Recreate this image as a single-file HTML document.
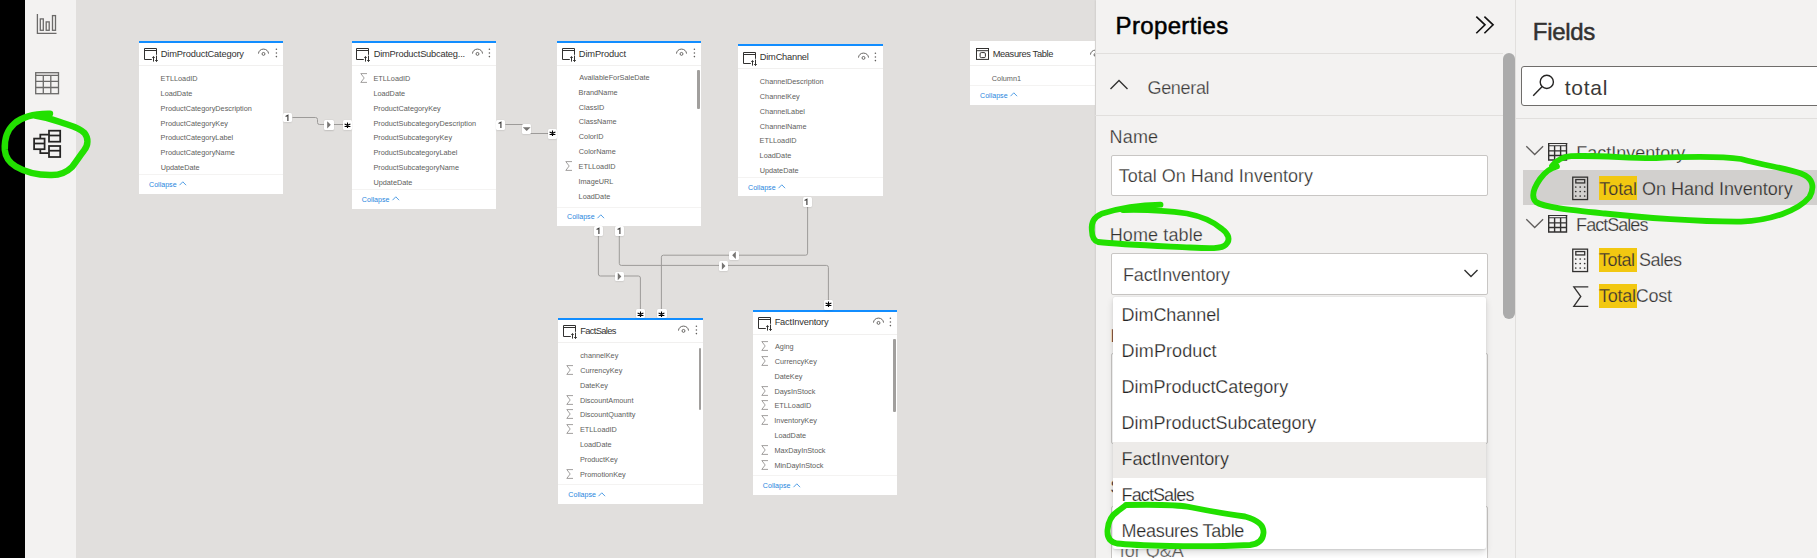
<!DOCTYPE html><html><head><meta charset="utf-8"><style>
*{margin:0;padding:0;box-sizing:border-box}
html,body{width:1817px;height:558px;overflow:hidden;background:#e1dfdd;font-family:"Liberation Sans", sans-serif}
.a{position:absolute}
.t{position:absolute;white-space:nowrap}
svg{position:absolute;overflow:visible}
</style></head><body>

<div class="a" style="left:0;top:0;width:25px;height:558px;background:#000"></div>
<div class="a" style="left:25px;top:0;width:51px;height:558px;background:#f3f2f1"></div>
<svg class="a" style="left:0;top:0" width="80" height="200" viewBox="0 0 80 200">
<g fill="none" stroke="#6b6a69" stroke-width="1.3">
<path d="M37.4 14 V33.3 H56.5"/>
<rect x="40.3" y="18.9" width="3" height="11.4"/>
<rect x="46.2" y="21.9" width="3" height="8.4"/>
<rect x="52.5" y="15.6" width="3" height="14.7"/>
</g>
<g fill="none" stroke="#6b6a69" stroke-width="1.3">
<rect x="35.7" y="72.7" width="22.8" height="21"/>
<path d="M35.7 75.4 H58.5 M35.7 81.3 H58.5 M35.7 87.5 H58.5 M43.3 75.4 V93.7 M50.8 75.4 V93.7"/>
</g>
<g fill="none" stroke="#252423" stroke-width="1.75">
<path d="M40.3 138.4 V134.5 H48.6 M40.3 149.4 V153 H48.6"/>
<rect x="34.1" y="138.6" width="10.5" height="10.6"/>
<path d="M34.1 143.5 H44.6"/>
<rect x="49" y="130.7" width="11.2" height="11"/>
<path d="M49 135.5 H60.2"/>
<rect x="49" y="146" width="11.2" height="11"/>
<path d="M49 150.7 H60.2"/>
</g>
</svg>
<div class="a" style="left:139px;top:40.8px;width:144.1px;height:152.89999999999998px;background:#fff;overflow:hidden">
<div class="a" style="left:0;top:0;width:144.1px;height:2px;background:#118dff"></div>
<svg style="left:5px;top:7.200000000000003px" width="16" height="16" viewBox="0 0 16 16"><g fill="none" stroke="#323130" stroke-width="1"><path d="M7.8 11.5 H0.5 V0.5 H12.5 V6.8"/><path d="M0.5 2.5 H12.5"/></g><g fill="none" stroke="#323130" stroke-width="1"><path d="M9.5 13.6 V8.6 M8.3 9.8 L9.5 8.6 L10.7 9.8 M12.5 7.6 V13.5 M11.2 12.2 L12.5 13.5 L13.8 12.2"/></g></svg>
<div class="t" style="left:21.83px;top:7.08px;line-height:13px;font-size:9.3px;color:#323130;letter-spacing:-0.185px;">DimProductCategory</div>
<svg style="left:118.3px;top:7.6px" width="14" height="9" viewBox="0 0 14 9"><g fill="none" stroke="#605e5c" stroke-width="0.95"><path d="M1.5 5.6 A5 4.5 0 0 1 11.5 5.6"/><circle cx="6.5" cy="5.9" r="1.45"/></g></svg>
<svg style="left:134.5px;top:7.5px" width="5" height="10" viewBox="0 0 5 10"><g fill="#605e5c"><circle cx="2.4" cy="1.3" r="0.8"/><circle cx="2.4" cy="5" r="0.8"/><circle cx="2.4" cy="8.6" r="0.8"/></g></svg>
<div class="a" style="left:0;top:24.3px;width:144.1px;height:1px;background:#f1f0ef"></div>
<div class="t" style="left:21.60px;top:33.37px;line-height:10px;font-size:7.3px;color:#605e5c;">ETLLoadID</div>
<div class="t" style="left:21.60px;top:48.19px;line-height:10px;font-size:7.3px;color:#605e5c;">LoadDate</div>
<div class="t" style="left:21.60px;top:63.01px;line-height:10px;font-size:7.3px;color:#605e5c;">ProductCategoryDescription</div>
<div class="t" style="left:21.60px;top:77.83px;line-height:10px;font-size:7.3px;color:#605e5c;">ProductCategoryKey</div>
<div class="t" style="left:21.60px;top:92.65px;line-height:10px;font-size:7.3px;color:#605e5c;">ProductCategoryLabel</div>
<div class="t" style="left:21.60px;top:107.47px;line-height:10px;font-size:7.3px;color:#605e5c;">ProductCategoryName</div>
<div class="t" style="left:21.63px;top:122.29px;line-height:10px;font-size:7.3px;color:#605e5c;">UpdateDate</div>
<div class="a" style="left:0;top:133.5px;width:144.1px;height:1px;background:#f4f3f2"></div>
<div class="t" style="left:10.05px;top:139.14px;line-height:10px;font-size:7.1px;color:#2886de;letter-spacing:-0.009px;">Collapse</div>
<svg style="left:40px;top:140.70px" width="8" height="5" viewBox="0 0 8 5"><path d="M0.5 4.2 L3.8 0.8 L7.1 4.2" fill="none" stroke="#2886de" stroke-width="0.8"/></svg>
</div>
<div class="a" style="left:351.8px;top:40.8px;width:144.7px;height:167.8px;background:#fff;overflow:hidden">
<div class="a" style="left:0;top:0;width:144.7px;height:2px;background:#118dff"></div>
<svg style="left:4.199999999999989px;top:7.200000000000003px" width="16" height="16" viewBox="0 0 16 16"><g fill="none" stroke="#323130" stroke-width="1"><path d="M7.8 11.5 H0.5 V0.5 H12.5 V6.8"/><path d="M0.5 2.5 H12.5"/></g><g fill="none" stroke="#323130" stroke-width="1"><path d="M9.5 13.6 V8.6 M8.3 9.8 L9.5 8.6 L10.7 9.8 M12.5 7.6 V13.5 M11.2 12.2 L12.5 13.5 L13.8 12.2"/></g></svg>
<div class="t" style="left:21.83px;top:7.08px;line-height:13px;font-size:9.3px;color:#323130;letter-spacing:-0.206px;">DimProductSubcateg...</div>
<svg style="left:118.89999999999999px;top:7.6px" width="14" height="9" viewBox="0 0 14 9"><g fill="none" stroke="#605e5c" stroke-width="0.95"><path d="M1.5 5.6 A5 4.5 0 0 1 11.5 5.6"/><circle cx="6.5" cy="5.9" r="1.45"/></g></svg>
<svg style="left:135.1px;top:7.5px" width="5" height="10" viewBox="0 0 5 10"><g fill="#605e5c"><circle cx="2.4" cy="1.3" r="0.8"/><circle cx="2.4" cy="5" r="0.8"/><circle cx="2.4" cy="8.6" r="0.8"/></g></svg>
<div class="a" style="left:0;top:24.3px;width:144.7px;height:1px;background:#f1f0ef"></div>
<svg style="left:8px;top:32.400000000000006px" width="8" height="10" viewBox="0 0 8 10"><path d="M7 0.6 H0.8 L4.2 5 L0.8 9.4 H7" fill="none" stroke="#8a8886" stroke-width="0.8"/></svg>
<div class="t" style="left:21.60px;top:33.37px;line-height:10px;font-size:7.3px;color:#605e5c;">ETLLoadID</div>
<div class="t" style="left:21.60px;top:48.19px;line-height:10px;font-size:7.3px;color:#605e5c;">LoadDate</div>
<div class="t" style="left:21.60px;top:63.01px;line-height:10px;font-size:7.3px;color:#605e5c;">ProductCategoryKey</div>
<div class="t" style="left:21.60px;top:77.83px;line-height:10px;font-size:7.3px;color:#605e5c;">ProductSubcategoryDescription</div>
<div class="t" style="left:21.60px;top:92.65px;line-height:10px;font-size:7.3px;color:#605e5c;">ProductSubcategoryKey</div>
<div class="t" style="left:21.60px;top:107.47px;line-height:10px;font-size:7.3px;color:#605e5c;">ProductSubcategoryLabel</div>
<div class="t" style="left:21.60px;top:122.29px;line-height:10px;font-size:7.3px;color:#605e5c;">ProductSubcategoryName</div>
<div class="t" style="left:21.63px;top:137.11px;line-height:10px;font-size:7.3px;color:#605e5c;">UpdateDate</div>
<div class="a" style="left:0;top:148.4px;width:144.7px;height:1px;background:#f4f3f2"></div>
<div class="t" style="left:10.04px;top:154.04px;line-height:10px;font-size:7.1px;color:#2886de;letter-spacing:-0.009px;">Collapse</div>
<svg style="left:40px;top:155.60px" width="8" height="5" viewBox="0 0 8 5"><path d="M0.5 4.2 L3.8 0.8 L7.1 4.2" fill="none" stroke="#2886de" stroke-width="0.8"/></svg>
</div>
<div class="a" style="left:557px;top:40.5px;width:144.2px;height:185.4px;background:#fff;overflow:hidden">
<div class="a" style="left:0;top:0;width:144.2px;height:2px;background:#118dff"></div>
<svg style="left:5px;top:7.5px" width="16" height="16" viewBox="0 0 16 16"><g fill="none" stroke="#323130" stroke-width="1"><path d="M7.8 11.5 H0.5 V0.5 H12.5 V6.8"/><path d="M0.5 2.5 H12.5"/></g><g fill="none" stroke="#323130" stroke-width="1"><path d="M9.5 13.6 V8.6 M8.3 9.8 L9.5 8.6 L10.7 9.8 M12.5 7.6 V13.5 M11.2 12.2 L12.5 13.5 L13.8 12.2"/></g></svg>
<div class="t" style="left:21.83px;top:7.08px;line-height:13px;font-size:9.3px;color:#323130;letter-spacing:-0.148px;">DimProduct</div>
<svg style="left:118.39999999999999px;top:7.6px" width="14" height="9" viewBox="0 0 14 9"><g fill="none" stroke="#605e5c" stroke-width="0.95"><path d="M1.5 5.6 A5 4.5 0 0 1 11.5 5.6"/><circle cx="6.5" cy="5.9" r="1.45"/></g></svg>
<svg style="left:134.6px;top:7.5px" width="5" height="10" viewBox="0 0 5 10"><g fill="#605e5c"><circle cx="2.4" cy="1.3" r="0.8"/><circle cx="2.4" cy="5" r="0.8"/><circle cx="2.4" cy="8.6" r="0.8"/></g></svg>
<div class="a" style="left:0;top:24.3px;width:144.2px;height:1px;background:#f1f0ef"></div>
<div class="t" style="left:22.18px;top:32.47px;line-height:10px;font-size:7.3px;color:#605e5c;">AvailableForSaleDate</div>
<div class="t" style="left:21.60px;top:47.29px;line-height:10px;font-size:7.3px;color:#605e5c;">BrandName</div>
<div class="t" style="left:21.84px;top:62.11px;line-height:10px;font-size:7.3px;color:#605e5c;">ClassID</div>
<div class="t" style="left:21.84px;top:76.93px;line-height:10px;font-size:7.3px;color:#605e5c;">ClassName</div>
<div class="t" style="left:21.84px;top:91.75px;line-height:10px;font-size:7.3px;color:#605e5c;">ColorID</div>
<div class="t" style="left:21.84px;top:106.57px;line-height:10px;font-size:7.3px;color:#605e5c;">ColorName</div>
<svg style="left:8px;top:120.42px" width="8" height="10" viewBox="0 0 8 10"><path d="M7 0.6 H0.8 L4.2 5 L0.8 9.4 H7" fill="none" stroke="#8a8886" stroke-width="0.8"/></svg>
<div class="t" style="left:21.60px;top:121.39px;line-height:10px;font-size:7.3px;color:#605e5c;">ETLLoadID</div>
<div class="t" style="left:21.52px;top:136.21px;line-height:10px;font-size:7.3px;color:#605e5c;">ImageURL</div>
<div class="t" style="left:21.60px;top:151.03px;line-height:10px;font-size:7.3px;color:#605e5c;">LoadDate</div>
<div class="a" style="left:0;top:166.0px;width:144.2px;height:1px;background:#f4f3f2"></div>
<div class="t" style="left:10.04px;top:171.64px;line-height:10px;font-size:7.1px;color:#2886de;letter-spacing:-0.009px;">Collapse</div>
<svg style="left:40px;top:173.20px" width="8" height="5" viewBox="0 0 8 5"><path d="M0.5 4.2 L3.8 0.8 L7.1 4.2" fill="none" stroke="#2886de" stroke-width="0.8"/></svg>
<div class="a" style="left:140.29999999999995px;top:29.299999999999997px;width:2.5px;height:39.7px;background:#a19f9d;border-radius:1px"></div>
</div>
<div class="a" style="left:738px;top:44.2px;width:144.8px;height:152.3px;background:#fff;overflow:hidden">
<div class="a" style="left:0;top:0;width:144.8px;height:2px;background:#118dff"></div>
<svg style="left:5px;top:7.799999999999997px" width="16" height="16" viewBox="0 0 16 16"><g fill="none" stroke="#323130" stroke-width="1"><path d="M7.8 11.5 H0.5 V0.5 H12.5 V6.8"/><path d="M0.5 2.5 H12.5"/></g><g fill="none" stroke="#323130" stroke-width="1"><path d="M9.5 13.6 V8.6 M8.3 9.8 L9.5 8.6 L10.7 9.8 M12.5 7.6 V13.5 M11.2 12.2 L12.5 13.5 L13.8 12.2"/></g></svg>
<div class="t" style="left:21.83px;top:7.08px;line-height:13px;font-size:9.3px;color:#323130;letter-spacing:-0.242px;">DimChannel</div>
<svg style="left:119.00000000000001px;top:7.6px" width="14" height="9" viewBox="0 0 14 9"><g fill="none" stroke="#605e5c" stroke-width="0.95"><path d="M1.5 5.6 A5 4.5 0 0 1 11.5 5.6"/><circle cx="6.5" cy="5.9" r="1.45"/></g></svg>
<svg style="left:135.20000000000002px;top:7.5px" width="5" height="10" viewBox="0 0 5 10"><g fill="#605e5c"><circle cx="2.4" cy="1.3" r="0.8"/><circle cx="2.4" cy="5" r="0.8"/><circle cx="2.4" cy="8.6" r="0.8"/></g></svg>
<div class="a" style="left:0;top:24.3px;width:144.8px;height:1px;background:#f1f0ef"></div>
<div class="t" style="left:21.84px;top:32.87px;line-height:10px;font-size:7.3px;color:#605e5c;">ChannelDescription</div>
<div class="t" style="left:21.84px;top:47.69px;line-height:10px;font-size:7.3px;color:#605e5c;">ChannelKey</div>
<div class="t" style="left:21.84px;top:62.51px;line-height:10px;font-size:7.3px;color:#605e5c;">ChannelLabel</div>
<div class="t" style="left:21.84px;top:77.33px;line-height:10px;font-size:7.3px;color:#605e5c;">ChannelName</div>
<div class="t" style="left:21.60px;top:92.15px;line-height:10px;font-size:7.3px;color:#605e5c;">ETLLoadID</div>
<div class="t" style="left:21.60px;top:106.97px;line-height:10px;font-size:7.3px;color:#605e5c;">LoadDate</div>
<div class="t" style="left:21.63px;top:121.79px;line-height:10px;font-size:7.3px;color:#605e5c;">UpdateDate</div>
<div class="a" style="left:0;top:132.9px;width:144.8px;height:1px;background:#f4f3f2"></div>
<div class="t" style="left:10.04px;top:138.54px;line-height:10px;font-size:7.1px;color:#2886de;letter-spacing:-0.009px;">Collapse</div>
<svg style="left:40px;top:140.10px" width="8" height="5" viewBox="0 0 8 5"><path d="M0.5 4.2 L3.8 0.8 L7.1 4.2" fill="none" stroke="#2886de" stroke-width="0.8"/></svg>
</div>
<div class="a" style="left:970px;top:41px;width:125px;height:63.599999999999994px;background:#fff;overflow:hidden">
<svg style="left:5.6px;top:6.6px" width="16" height="16" viewBox="0 0 16 16"><g fill="none" stroke="#323130" stroke-width="1"><rect x="0.5" y="0.5" width="12" height="10.9"/><path d="M0.5 2.7 H12.5"/><rect x="4.1" y="4.6" width="5.3" height="5" rx="1.2"/></g></svg>
<div class="t" style="left:22.63px;top:7.08px;line-height:13px;font-size:9.3px;color:#323130;letter-spacing:-0.362px;">Measures Table</div>
<svg style="left:119.2px;top:7.6px" width="14" height="9" viewBox="0 0 14 9"><g fill="none" stroke="#605e5c" stroke-width="0.95"><path d="M1.5 5.6 A5 4.5 0 0 1 11.5 5.6"/><circle cx="6.5" cy="5.9" r="1.45"/></g></svg>
<svg style="left:135.4px;top:7.5px" width="5" height="10" viewBox="0 0 5 10"><g fill="#605e5c"><circle cx="2.4" cy="1.3" r="0.8"/><circle cx="2.4" cy="5" r="0.8"/><circle cx="2.4" cy="8.6" r="0.8"/></g></svg>
<div class="a" style="left:0;top:24.3px;width:145px;height:1px;background:#f1f0ef"></div>
<div class="t" style="left:21.84px;top:33.37px;line-height:10px;font-size:7.3px;color:#605e5c;">Column1</div>
<div class="a" style="left:0;top:44.2px;width:145px;height:1px;background:#f4f3f2"></div>
<div class="t" style="left:10.04px;top:49.84px;line-height:10px;font-size:7.1px;color:#2886de;letter-spacing:-0.009px;">Collapse</div>
<svg style="left:40px;top:51.40px" width="8" height="5" viewBox="0 0 8 5"><path d="M0.5 4.2 L3.8 0.8 L7.1 4.2" fill="none" stroke="#2886de" stroke-width="0.8"/></svg>
</div>
<div class="a" style="left:558.3px;top:317.8px;width:144.9px;height:186.0px;background:#fff;overflow:hidden">
<div class="a" style="left:0;top:0;width:144.9px;height:2px;background:#118dff"></div>
<svg style="left:4.7000000000000455px;top:7.199999999999989px" width="16" height="16" viewBox="0 0 16 16"><g fill="none" stroke="#323130" stroke-width="1"><path d="M7.8 11.5 H0.5 V0.5 H12.5 V6.8"/><path d="M0.5 2.5 H12.5"/></g><g fill="none" stroke="#323130" stroke-width="1"><path d="M9.5 13.6 V8.6 M8.3 9.8 L9.5 8.6 L10.7 9.8 M12.5 7.6 V13.5 M11.2 12.2 L12.5 13.5 L13.8 12.2"/></g></svg>
<div class="t" style="left:21.83px;top:7.08px;line-height:13px;font-size:9.3px;color:#323130;letter-spacing:-0.621px;">FactSales</div>
<svg style="left:119.10000000000001px;top:7.6px" width="14" height="9" viewBox="0 0 14 9"><g fill="none" stroke="#605e5c" stroke-width="0.95"><path d="M1.5 5.6 A5 4.5 0 0 1 11.5 5.6"/><circle cx="6.5" cy="5.9" r="1.45"/></g></svg>
<svg style="left:135.3px;top:7.5px" width="5" height="10" viewBox="0 0 5 10"><g fill="#605e5c"><circle cx="2.4" cy="1.3" r="0.8"/><circle cx="2.4" cy="5" r="0.8"/><circle cx="2.4" cy="8.6" r="0.8"/></g></svg>
<div class="a" style="left:0;top:24.3px;width:144.9px;height:1px;background:#f1f0ef"></div>
<div class="t" style="left:21.89px;top:33.37px;line-height:10px;font-size:7.3px;color:#605e5c;">channelKey</div>
<svg style="left:8px;top:47.219999999999985px" width="8" height="10" viewBox="0 0 8 10"><path d="M7 0.6 H0.8 L4.2 5 L0.8 9.4 H7" fill="none" stroke="#8a8886" stroke-width="0.8"/></svg>
<div class="t" style="left:21.84px;top:48.19px;line-height:10px;font-size:7.3px;color:#605e5c;">CurrencyKey</div>
<div class="t" style="left:21.60px;top:63.01px;line-height:10px;font-size:7.3px;color:#605e5c;">DateKey</div>
<svg style="left:8px;top:76.85999999999997px" width="8" height="10" viewBox="0 0 8 10"><path d="M7 0.6 H0.8 L4.2 5 L0.8 9.4 H7" fill="none" stroke="#8a8886" stroke-width="0.8"/></svg>
<div class="t" style="left:21.60px;top:77.83px;line-height:10px;font-size:7.3px;color:#605e5c;">DiscountAmount</div>
<svg style="left:8px;top:91.67999999999996px" width="8" height="10" viewBox="0 0 8 10"><path d="M7 0.6 H0.8 L4.2 5 L0.8 9.4 H7" fill="none" stroke="#8a8886" stroke-width="0.8"/></svg>
<div class="t" style="left:21.60px;top:92.65px;line-height:10px;font-size:7.3px;color:#605e5c;">DiscountQuantity</div>
<svg style="left:8px;top:106.50000000000001px" width="8" height="10" viewBox="0 0 8 10"><path d="M7 0.6 H0.8 L4.2 5 L0.8 9.4 H7" fill="none" stroke="#8a8886" stroke-width="0.8"/></svg>
<div class="t" style="left:21.60px;top:107.47px;line-height:10px;font-size:7.3px;color:#605e5c;">ETLLoadID</div>
<div class="t" style="left:21.60px;top:122.29px;line-height:10px;font-size:7.3px;color:#605e5c;">LoadDate</div>
<div class="t" style="left:21.60px;top:137.11px;line-height:10px;font-size:7.3px;color:#605e5c;">ProductKey</div>
<svg style="left:8px;top:150.95999999999998px" width="8" height="10" viewBox="0 0 8 10"><path d="M7 0.6 H0.8 L4.2 5 L0.8 9.4 H7" fill="none" stroke="#8a8886" stroke-width="0.8"/></svg>
<div class="t" style="left:21.60px;top:151.93px;line-height:10px;font-size:7.3px;color:#605e5c;">PromotionKey</div>
<div class="a" style="left:0;top:166.6px;width:144.9px;height:1px;background:#f4f3f2"></div>
<div class="t" style="left:10.04px;top:172.24px;line-height:10px;font-size:7.1px;color:#2886de;letter-spacing:-0.009px;">Collapse</div>
<svg style="left:40px;top:173.80px" width="8" height="5" viewBox="0 0 8 5"><path d="M0.5 4.2 L3.8 0.8 L7.1 4.2" fill="none" stroke="#2886de" stroke-width="0.8"/></svg>
<div class="a" style="left:140.5px;top:29.899999999999977px;width:2.5px;height:62.0px;background:#a19f9d;border-radius:1px"></div>
</div>
<div class="a" style="left:752.8px;top:309.6px;width:144.6px;height:185.29999999999995px;background:#fff;overflow:hidden">
<div class="a" style="left:0;top:0;width:144.6px;height:2px;background:#118dff"></div>
<svg style="left:5.2000000000000455px;top:7.399999999999977px" width="16" height="16" viewBox="0 0 16 16"><g fill="none" stroke="#323130" stroke-width="1"><path d="M7.8 11.5 H0.5 V0.5 H12.5 V6.8"/><path d="M0.5 2.5 H12.5"/></g><g fill="none" stroke="#323130" stroke-width="1"><path d="M9.5 13.6 V8.6 M8.3 9.8 L9.5 8.6 L10.7 9.8 M12.5 7.6 V13.5 M11.2 12.2 L12.5 13.5 L13.8 12.2"/></g></svg>
<div class="t" style="left:21.83px;top:6.28px;line-height:13px;font-size:9.3px;color:#323130;letter-spacing:-0.195px;">FactInventory</div>
<svg style="left:118.8px;top:7.6px" width="14" height="9" viewBox="0 0 14 9"><g fill="none" stroke="#605e5c" stroke-width="0.95"><path d="M1.5 5.6 A5 4.5 0 0 1 11.5 5.6"/><circle cx="6.5" cy="5.9" r="1.45"/></g></svg>
<svg style="left:135.0px;top:7.5px" width="5" height="10" viewBox="0 0 5 10"><g fill="#605e5c"><circle cx="2.4" cy="1.3" r="0.8"/><circle cx="2.4" cy="5" r="0.8"/><circle cx="2.4" cy="8.6" r="0.8"/></g></svg>
<div class="a" style="left:0;top:24.3px;width:144.6px;height:1px;background:#f1f0ef"></div>
<svg style="left:8px;top:31.599999999999977px" width="8" height="10" viewBox="0 0 8 10"><path d="M7 0.6 H0.8 L4.2 5 L0.8 9.4 H7" fill="none" stroke="#8a8886" stroke-width="0.8"/></svg>
<div class="t" style="left:22.18px;top:32.57px;line-height:10px;font-size:7.3px;color:#605e5c;">Aging</div>
<svg style="left:8px;top:46.41999999999997px" width="8" height="10" viewBox="0 0 8 10"><path d="M7 0.6 H0.8 L4.2 5 L0.8 9.4 H7" fill="none" stroke="#8a8886" stroke-width="0.8"/></svg>
<div class="t" style="left:21.84px;top:47.39px;line-height:10px;font-size:7.3px;color:#605e5c;">CurrencyKey</div>
<div class="t" style="left:21.60px;top:62.21px;line-height:10px;font-size:7.3px;color:#605e5c;">DateKey</div>
<svg style="left:8px;top:76.05999999999996px" width="8" height="10" viewBox="0 0 8 10"><path d="M7 0.6 H0.8 L4.2 5 L0.8 9.4 H7" fill="none" stroke="#8a8886" stroke-width="0.8"/></svg>
<div class="t" style="left:21.60px;top:77.03px;line-height:10px;font-size:7.3px;color:#605e5c;">DaysInStock</div>
<svg style="left:8px;top:90.87999999999995px" width="8" height="10" viewBox="0 0 8 10"><path d="M7 0.6 H0.8 L4.2 5 L0.8 9.4 H7" fill="none" stroke="#8a8886" stroke-width="0.8"/></svg>
<div class="t" style="left:21.60px;top:91.85px;line-height:10px;font-size:7.3px;color:#605e5c;">ETLLoadID</div>
<svg style="left:8px;top:105.7px" width="8" height="10" viewBox="0 0 8 10"><path d="M7 0.6 H0.8 L4.2 5 L0.8 9.4 H7" fill="none" stroke="#8a8886" stroke-width="0.8"/></svg>
<div class="t" style="left:21.52px;top:106.67px;line-height:10px;font-size:7.3px;color:#605e5c;">InventoryKey</div>
<div class="t" style="left:21.60px;top:121.49px;line-height:10px;font-size:7.3px;color:#605e5c;">LoadDate</div>
<svg style="left:8px;top:135.33999999999997px" width="8" height="10" viewBox="0 0 8 10"><path d="M7 0.6 H0.8 L4.2 5 L0.8 9.4 H7" fill="none" stroke="#8a8886" stroke-width="0.8"/></svg>
<div class="t" style="left:21.60px;top:136.31px;line-height:10px;font-size:7.3px;color:#605e5c;">MaxDayInStock</div>
<svg style="left:8px;top:150.15999999999997px" width="8" height="10" viewBox="0 0 8 10"><path d="M7 0.6 H0.8 L4.2 5 L0.8 9.4 H7" fill="none" stroke="#8a8886" stroke-width="0.8"/></svg>
<div class="t" style="left:21.60px;top:151.13px;line-height:10px;font-size:7.3px;color:#605e5c;">MinDayInStock</div>
<div class="a" style="left:0;top:165.9px;width:144.6px;height:1px;background:#f4f3f2"></div>
<div class="t" style="left:10.04px;top:171.54px;line-height:10px;font-size:7.1px;color:#2886de;letter-spacing:-0.009px;">Collapse</div>
<svg style="left:40px;top:173.10px" width="8" height="5" viewBox="0 0 8 5"><path d="M0.5 4.2 L3.8 0.8 L7.1 4.2" fill="none" stroke="#2886de" stroke-width="0.8"/></svg>
<div class="a" style="left:140.4000000000001px;top:29.099999999999966px;width:2.5px;height:73.30000000000001px;background:#a19f9d;border-radius:1px"></div>
</div>
<svg class="a" style="left:0;top:0" width="1100" height="558" viewBox="0 0 1100 558"><g fill="none" stroke="#9d9b99" stroke-width="1">
<path d="M292.5 117.5 H315.5 Q317.5 117.5 317.5 119.5 V122.5 Q317.5 124.5 319.5 124.5 H343"/>
<path d="M505.4 124.5 H526.5 V133.5 H548"/>
<path d="M598.4 235 V274 Q598.4 276 600.4 276 H638.4 Q640.4 276 640.4 278 V309"/>
<path d="M619.3 235 V263.4 Q619.3 265.4 621.3 265.4 H826.4 Q828.4 265.4 828.4 267.4 V300"/>
<path d="M807.6 206 V253.2 Q807.6 255.2 805.6 255.2 H663.4 Q661.4 255.2 661.4 257.2 V309"/>
</g></svg>
<div class="a" style="left:283.3px;top:112.8px;width:9.20px;height:9.40px;background:#fff;border-radius:1.5px;box-shadow:0 0.5px 1.5px rgba(0,0,0,0.14)"></div>
<svg class="a" style="left:284.9px;top:112.8px" width="6" height="10" viewBox="0 0 6 10"><path d="M0.6 3.5 L2.9 2.3 V7.9" fill="none" stroke="#3b3a39" stroke-width="1.15"/></svg>
<div class="a" style="left:324px;top:120px;width:10.00px;height:9.70px;background:#fff;border-radius:1.5px;box-shadow:0 0.5px 1.5px rgba(0,0,0,0.14)"></div>
<svg class="a" style="left:0;top:0" width="1" height="1"><path d="M327.2 121.14999999999999 L330.8 124.85 L327.2 128.54999999999998 Z" fill="#767472"/></svg>
<div class="a" style="left:343px;top:120px;width:8.80px;height:10.00px;background:#fff;border-radius:1.5px;box-shadow:0 0.5px 1.5px rgba(0,0,0,0.14)"></div>
<svg class="a" style="left:343px;top:120.5px" width="9" height="9" viewBox="0 0 9 9"><g stroke="#000" stroke-width="1.1"><path d="M4.5 1.4 V7.1 M1.6 2.9 L7.4 5.6 M1.6 5.6 L7.4 2.9"/></g></svg>
<div class="a" style="left:496.3px;top:120px;width:9.10px;height:9.70px;background:#fff;border-radius:1.5px;box-shadow:0 0.5px 1.5px rgba(0,0,0,0.14)"></div>
<svg class="a" style="left:497.85px;top:120px" width="6" height="10" viewBox="0 0 6 10"><path d="M0.6 3.5 L2.9 2.3 V7.9" fill="none" stroke="#3b3a39" stroke-width="1.15"/></svg>
<div class="a" style="left:522px;top:124.1px;width:9.40px;height:9.70px;background:#fff;border-radius:1.5px;box-shadow:0 0.5px 1.5px rgba(0,0,0,0.14)"></div>
<svg class="a" style="left:0;top:0" width="1" height="1"><path d="M522.8000000000001 127.35 L530.6 127.35 L526.7 130.95 Z" fill="#767472"/></svg>
<div class="a" style="left:548px;top:128.8px;width:9.00px;height:10.00px;background:#fff;border-radius:1.5px;box-shadow:0 0.5px 1.5px rgba(0,0,0,0.14)"></div>
<svg class="a" style="left:548px;top:129.3px" width="9" height="9" viewBox="0 0 9 9"><g stroke="#000" stroke-width="1.1"><path d="M4.5 1.4 V7.1 M1.6 2.9 L7.4 5.6 M1.6 5.6 L7.4 2.9"/></g></svg>
<div class="a" style="left:593.7px;top:226.2px;width:9.70px;height:9.50px;background:#fff;border-radius:1.5px;box-shadow:0 0.5px 1.5px rgba(0,0,0,0.14)"></div>
<svg class="a" style="left:595.55px;top:226.2px" width="6" height="10" viewBox="0 0 6 10"><path d="M0.6 3.5 L2.9 2.3 V7.9" fill="none" stroke="#3b3a39" stroke-width="1.15"/></svg>
<div class="a" style="left:614.7px;top:226.2px;width:9.70px;height:9.50px;background:#fff;border-radius:1.5px;box-shadow:0 0.5px 1.5px rgba(0,0,0,0.14)"></div>
<svg class="a" style="left:616.55px;top:226.2px" width="6" height="10" viewBox="0 0 6 10"><path d="M0.6 3.5 L2.9 2.3 V7.9" fill="none" stroke="#3b3a39" stroke-width="1.15"/></svg>
<div class="a" style="left:614.8px;top:271.5px;width:9.50px;height:9.90px;background:#fff;border-radius:1.5px;box-shadow:0 0.5px 1.5px rgba(0,0,0,0.14)"></div>
<svg class="a" style="left:0;top:0" width="1" height="1"><path d="M617.75 272.75 L621.3499999999999 276.45 L617.75 280.15 Z" fill="#767472"/></svg>
<div class="a" style="left:718.8px;top:261.1px;width:9.70px;height:9.70px;background:#fff;border-radius:1.5px;box-shadow:0 0.5px 1.5px rgba(0,0,0,0.14)"></div>
<svg class="a" style="left:0;top:0" width="1" height="1"><path d="M721.85 262.25000000000006 L725.4499999999999 265.95000000000005 L721.85 269.65000000000003 Z" fill="#767472"/></svg>
<div class="a" style="left:729px;top:250.6px;width:10.00px;height:9.40px;background:#fff;border-radius:1.5px;box-shadow:0 0.5px 1.5px rgba(0,0,0,0.14)"></div>
<svg class="a" style="left:0;top:0" width="1" height="1"><path d="M735.8 251.60000000000002 L732.2 255.3 L735.8 259.0 Z" fill="#767472"/></svg>
<div class="a" style="left:802.6px;top:197px;width:9.00px;height:9.50px;background:#fff;border-radius:1.5px;box-shadow:0 0.5px 1.5px rgba(0,0,0,0.14)"></div>
<svg class="a" style="left:804.1px;top:197px" width="6" height="10" viewBox="0 0 6 10"><path d="M0.6 3.5 L2.9 2.3 V7.9" fill="none" stroke="#3b3a39" stroke-width="1.15"/></svg>
<div class="a" style="left:636px;top:309px;width:9.40px;height:8.80px;background:#fff;border-radius:1.5px;box-shadow:0 0.5px 1.5px rgba(0,0,0,0.14)"></div>
<svg class="a" style="left:636px;top:309.5px" width="9" height="9" viewBox="0 0 9 9"><g stroke="#000" stroke-width="1.1"><path d="M4.5 1.4 V7.1 M1.6 2.9 L7.4 5.6 M1.6 5.6 L7.4 2.9"/></g></svg>
<div class="a" style="left:656.9px;top:309px;width:9.70px;height:8.80px;background:#fff;border-radius:1.5px;box-shadow:0 0.5px 1.5px rgba(0,0,0,0.14)"></div>
<svg class="a" style="left:657px;top:309.5px" width="9" height="9" viewBox="0 0 9 9"><g stroke="#000" stroke-width="1.1"><path d="M4.5 1.4 V7.1 M1.6 2.9 L7.4 5.6 M1.6 5.6 L7.4 2.9"/></g></svg>
<div class="a" style="left:823.8px;top:299.8px;width:9.20px;height:9.80px;background:#fff;border-radius:1.5px;box-shadow:0 0.5px 1.5px rgba(0,0,0,0.14)"></div>
<svg class="a" style="left:824px;top:300.3px" width="9" height="9" viewBox="0 0 9 9"><g stroke="#000" stroke-width="1.1"><path d="M4.5 1.4 V7.1 M1.6 2.9 L7.4 5.6 M1.6 5.6 L7.4 2.9"/></g></svg>
<div class="a" style="left:1095.8px;top:0;width:420px;height:558px;background:#f3f2f1;box-shadow:-1px 0 1.5px rgba(0,0,0,0.07)"></div>
<div class="t" style="left:1115.52px;top:9.48px;line-height:34px;font-size:24px;color:#000;letter-spacing:0.360px;-webkit-text-stroke:0.5px #000">Properties</div>
<svg class="a" style="left:1474px;top:14px" width="22" height="22" viewBox="0 0 22 22"><g fill="none" stroke="#111" stroke-width="1.6"><path d="M2.3 2.6 L11 10.8 L2.3 19.3"/><path d="M10.4 2.6 L19.1 10.8 L10.4 19.3"/></g></svg>
<div class="a" style="left:1095px;top:53px;width:408px;height:1px;background:#e1dfdd"></div>
<svg class="a" style="left:1108px;top:78px" width="22" height="14" viewBox="0 0 22 14"><path d="M2.5 11 L11 2.5 L19.5 11" fill="none" stroke="#323130" stroke-width="1.4"/></svg>
<div class="t" style="left:1147.50px;top:75.86px;line-height:25px;font-size:18px;color:#3b3a39;letter-spacing:-0.320px;-webkit-text-stroke:0.25px #f3f2f1;">General</div>
<div class="a" style="left:1095px;top:115px;width:408px;height:1px;background:#e1dfdd"></div>
<div class="t" style="left:1109.52px;top:124.96px;line-height:25px;font-size:18px;color:#323130;letter-spacing:0.178px;-webkit-text-stroke:0.25px #f3f2f1;">Name</div>
<div class="a" style="left:1110.5px;top:154.5px;width:377.5px;height:41px;background:#fff;border:1px solid #c8c6c4;border-radius:2px"></div>
<div class="t" style="left:1118.80px;top:163.76px;line-height:25px;font-size:18px;color:#323130;-webkit-text-stroke:0.25px #fff;">Total On Hand Inventory</div>
<div class="t" style="left:1109.72px;top:222.96px;line-height:25px;font-size:18px;color:#323130;letter-spacing:0.114px;-webkit-text-stroke:0.25px #f3f2f1;">Home table</div>
<div class="a" style="left:1110.5px;top:253.4px;width:377.5px;height:42px;background:#fff;border:1px solid #c8c6c4;border-radius:2px"></div>
<div class="t" style="left:1123.02px;top:262.86px;line-height:25px;font-size:18px;color:#323130;letter-spacing:-0.167px;-webkit-text-stroke:0.25px #fff;">FactInventory</div>
<svg class="a" style="left:1462px;top:267px" width="18" height="12" viewBox="0 0 18 12"><path d="M2.5 3 L9 9.5 L15.5 3" fill="none" stroke="#323130" stroke-width="1.4"/></svg>
<div class="t" style="left:1110.52px;top:323.96px;line-height:25px;font-size:18px;color:#323130;-webkit-text-stroke:0.25px #f3f2f1;">Description</div>
<div class="a" style="left:1110.5px;top:353px;width:377.5px;height:91px;background:#fff;border:1px solid #c8c6c4;border-radius:2px"></div>
<div class="t" style="left:1110.19px;top:474.96px;line-height:25px;font-size:18px;color:#323130;-webkit-text-stroke:0.25px #f3f2f1;">Synonyms</div>
<div class="a" style="left:1110.5px;top:505.7px;width:377.5px;height:70px;background:#fff;border:1px solid #c8c6c4;border-radius:2px"></div>
<div class="t" style="left:1119.78px;top:538.96px;line-height:25px;font-size:18px;color:#605e5c;-webkit-text-stroke:0.25px #fff;">for Q&amp;A</div>
<div class="a" style="left:1503px;top:53px;width:12px;height:266px;background:#ababab;border-radius:6px"></div>
<div class="a" style="left:1112.5px;top:297px;width:373px;height:252px;background:#fff;box-shadow:0 3.2px 7.2px rgba(0,0,0,0.13),0 0.6px 1.8px rgba(0,0,0,0.11);border-radius:2px"></div>
<div class="a" style="left:1112.5px;top:442.2px;width:373px;height:35.5px;background:#edebe9"></div>
<div class="t" style="left:1121.62px;top:303.36px;line-height:25px;font-size:18px;color:#252423;letter-spacing:-0.061px;-webkit-text-stroke:0.25px #fff;">DimChannel</div>
<div class="t" style="left:1121.62px;top:339.36px;line-height:25px;font-size:18px;color:#252423;letter-spacing:0.102px;-webkit-text-stroke:0.25px #fff;">DimProduct</div>
<div class="t" style="left:1121.62px;top:375.36px;line-height:25px;font-size:18px;color:#252423;letter-spacing:-0.027px;-webkit-text-stroke:0.25px #fff;">DimProductCategory</div>
<div class="t" style="left:1121.62px;top:411.36px;line-height:25px;font-size:18px;color:#252423;letter-spacing:-0.017px;-webkit-text-stroke:0.25px #fff;">DimProductSubcategory</div>
<div class="t" style="left:1121.62px;top:447.36px;line-height:25px;font-size:18px;color:#252423;letter-spacing:-0.142px;-webkit-text-stroke:0.25px #edebe9;">FactInventory</div>
<div class="t" style="left:1121.62px;top:483.36px;line-height:25px;font-size:18px;color:#252423;letter-spacing:-0.905px;-webkit-text-stroke:0.25px #fff;">FactSales</div>
<div class="t" style="left:1121.62px;top:519.36px;line-height:25px;font-size:18px;color:#252423;letter-spacing:-0.305px;-webkit-text-stroke:0.25px #fff;">Measures Table</div>
<div class="a" style="left:1515px;top:0;width:302px;height:558px;background:#f3f2f1;border-left:1px solid #e1dfdd"></div>
<div class="t" style="left:1532.82px;top:15.08px;line-height:34px;font-size:24px;color:#323130;letter-spacing:-0.300px;-webkit-text-stroke:0.5px #323130">Fields</div>
<div class="a" style="left:1521.3px;top:66.4px;width:310px;height:39.5px;background:#fff;border:1px solid #6f6d6b;border-radius:3px"></div>
<svg class="a" style="left:1525px;top:65px" width="30" height="40" viewBox="0 0 30 40"><g fill="none" stroke="#252423" stroke-width="1.4"><circle cx="21.8" cy="16.9" r="6.6"/><path d="M17.2 21.6 L8.2 30.7"/></g></svg>
<div class="t" style="left:1564.68px;top:72.92px;line-height:29px;font-size:21px;color:#3b3a39;letter-spacing:0.736px;">total</div>
<div class="a" style="left:1515px;top:118px;width:302px;height:1px;background:#e1dfdd"></div>
<div class="a" style="left:1523.1px;top:170.1px;width:294px;height:35.3px;background:#d2d0ce"></div>
<svg class="a" style="left:1525.5px;top:145.7px" width="20" height="12" viewBox="0 0 20 12"><path d="M0.3 0.2 L8.7 8.5 L17.1 0.2" fill="none" stroke="#605e5c" stroke-width="1.3"/></svg>
<svg class="a" style="left:1548.2px;top:143.2px" width="20" height="18" viewBox="0 0 20 18"><g fill="none" stroke="#323130" stroke-width="1.4"><path d="M0.7 0 V17 H18.5 V0"/><path d="M0.7 7.9 H18.5 M0.7 12.5 H18.5 M6.6 3 V17 M12.6 3 V17"/></g><path d="M0 0.55 H19.2 M0.7 2.75 H18.5" stroke="#323130" stroke-width="1.1"/></svg>
<div class="t" style="left:1576.22px;top:140.76px;line-height:25px;font-size:18px;color:#323130;-webkit-text-stroke:0.25px #f3f2f1;">FactInventory</div>
<svg class="a" style="left:1572px;top:175.8px" width="18" height="25" viewBox="0 0 18 25"><g fill="none" stroke="#323130" stroke-width="1.3"><rect x="0.75" y="1.15" width="14.8" height="22.4"/><rect x="3.8" y="3.55" width="8.9" height="3.4"/></g><g fill="#323130"><circle cx="3.75" cy="11.00" r="0.85"/><circle cx="8.20" cy="11.00" r="0.85"/><circle cx="12.65" cy="11.00" r="0.85"/><circle cx="3.75" cy="15.50" r="0.85"/><circle cx="8.20" cy="15.50" r="0.85"/><circle cx="12.65" cy="15.50" r="0.85"/><circle cx="3.75" cy="20.00" r="0.85"/><circle cx="8.20" cy="20.00" r="0.85"/><circle cx="12.65" cy="20.00" r="0.85"/></g></svg>
<div class="a" style="left:1599px;top:176.2px;width:38.1px;height:23.8px;background:#f2c811"></div>
<div class="t" style="left:1599.19px;top:176.56px;line-height:25px;font-size:18px;color:#323130;letter-spacing:-0.026px;"><span style="-webkit-text-stroke:0.25px #f2c811">Total</span><span style="-webkit-text-stroke:0.25px #d2d0ce"> On Hand Inventory</span></div>
<svg class="a" style="left:1525.8px;top:218.7px" width="20" height="12" viewBox="0 0 20 12"><path d="M0.3 0.2 L8.7 8.5 L17.1 0.2" fill="none" stroke="#605e5c" stroke-width="1.3"/></svg>
<svg class="a" style="left:1548.2px;top:215.3px" width="20" height="18" viewBox="0 0 20 18"><g fill="none" stroke="#323130" stroke-width="1.4"><path d="M0.7 0 V17 H18.5 V0"/><path d="M0.7 7.9 H18.5 M0.7 12.5 H18.5 M6.6 3 V17 M12.6 3 V17"/></g><path d="M0 0.55 H19.2 M0.7 2.75 H18.5" stroke="#323130" stroke-width="1.1"/></svg>
<div class="t" style="left:1576.12px;top:212.56px;line-height:25px;font-size:18px;color:#323130;letter-spacing:-0.967px;-webkit-text-stroke:0.25px #f3f2f1;">FactSales</div>
<svg class="a" style="left:1572.3px;top:248.2px" width="18" height="25" viewBox="0 0 18 25"><g fill="none" stroke="#323130" stroke-width="1.3"><rect x="0.75" y="1.15" width="14.8" height="22.4"/><rect x="3.8" y="3.55" width="8.9" height="3.4"/></g><g fill="#323130"><circle cx="3.75" cy="11.00" r="0.85"/><circle cx="8.20" cy="11.00" r="0.85"/><circle cx="12.65" cy="11.00" r="0.85"/><circle cx="3.75" cy="15.50" r="0.85"/><circle cx="8.20" cy="15.50" r="0.85"/><circle cx="12.65" cy="15.50" r="0.85"/><circle cx="3.75" cy="20.00" r="0.85"/><circle cx="8.20" cy="20.00" r="0.85"/><circle cx="12.65" cy="20.00" r="0.85"/></g></svg>
<div class="a" style="left:1598.9px;top:248px;width:38.1px;height:23.7px;background:#f2c811"></div>
<div class="t" style="left:1599.10px;top:248.06px;line-height:25px;font-size:18px;color:#323130;letter-spacing:-0.523px;"><span style="-webkit-text-stroke:0.25px #f2c811">Total</span><span style="-webkit-text-stroke:0.25px #f3f2f1"> Sales</span></div>
<svg class="a" style="left:1573px;top:285.5px" width="18" height="22" viewBox="0 0 18 22"><path d="M15.3 0.8 H0.8 L7.8 10.5 L0.8 20.3 H15.3" fill="none" stroke="#323130" stroke-width="1.3"/></svg>
<div class="a" style="left:1598.9px;top:283.9px;width:38.1px;height:23.7px;background:#f2c811"></div>
<div class="t" style="left:1599.10px;top:284.16px;line-height:25px;font-size:18px;color:#323130;letter-spacing:-0.259px;"><span style="-webkit-text-stroke:0.25px #f2c811">Total</span><span style="-webkit-text-stroke:0.25px #f3f2f1">Cost</span></div>
<svg class="a" style="left:0;top:0" width="1817" height="558" viewBox="0 0 1817 558"><g fill="none" stroke="#22e000" stroke-width="5.8" stroke-linecap="round" stroke-linejoin="round">
<path stroke-width="6.4" d="M50 113.8 C35 113.5 22 117 14.3 123.6 C6 131 4.2 140 4.8 150 C5.5 158 10 163 15.8 166.5 C25 172 35 175 50 175 C60 175.5 67 172 72 167 C76 162 79 157 84 150.5 C88.5 145 88.5 138 84.5 133 C79 127 70 125.5 60 122 C52 119 45 117 35 115.5"/>
<path d="M1160.5 204.7 C1140 205 1120 208 1101.5 213.8 C1094 217 1091 222 1091.8 230 C1092 237 1094 241 1098 242 C1120 244.5 1160 246 1190 247.5 C1210 248.5 1222 249 1226 244.5 C1230.5 240 1229 234 1222 229 C1214 222 1200 216 1187 213.5 C1170 211 1145 209.5 1123 210"/>
<path d="M1126 505 C1150 504.5 1178 504.5 1192 507.5 C1207 510.5 1225 514 1245 516.5 C1258 520 1264 526 1263.5 533 C1263 540 1259 544 1250 545 C1230 546 1200 546.5 1170 546 C1150 545.5 1130 545 1117 543.5 C1110 542 1107 537 1107.5 530 C1108 522 1112 515 1118 511 C1122 508 1126 505 1126 505"/>
<path d="M1557 166.5 C1550 168 1545 172 1540 179 C1533 189 1531 197 1536 202 C1544 207.5 1570 210 1605 213.5 C1640 217.5 1700 222 1741 221.7 C1770 220.5 1798 211 1809.5 197 C1815 187 1813 178 1801 173.5 C1788 169 1768 166 1741 159 C1720 156 1690 156.5 1656 158 C1630 158.5 1600 155 1571 156.2 C1561 157 1556 161 1552 166"/>
</g></svg>
</body></html>
